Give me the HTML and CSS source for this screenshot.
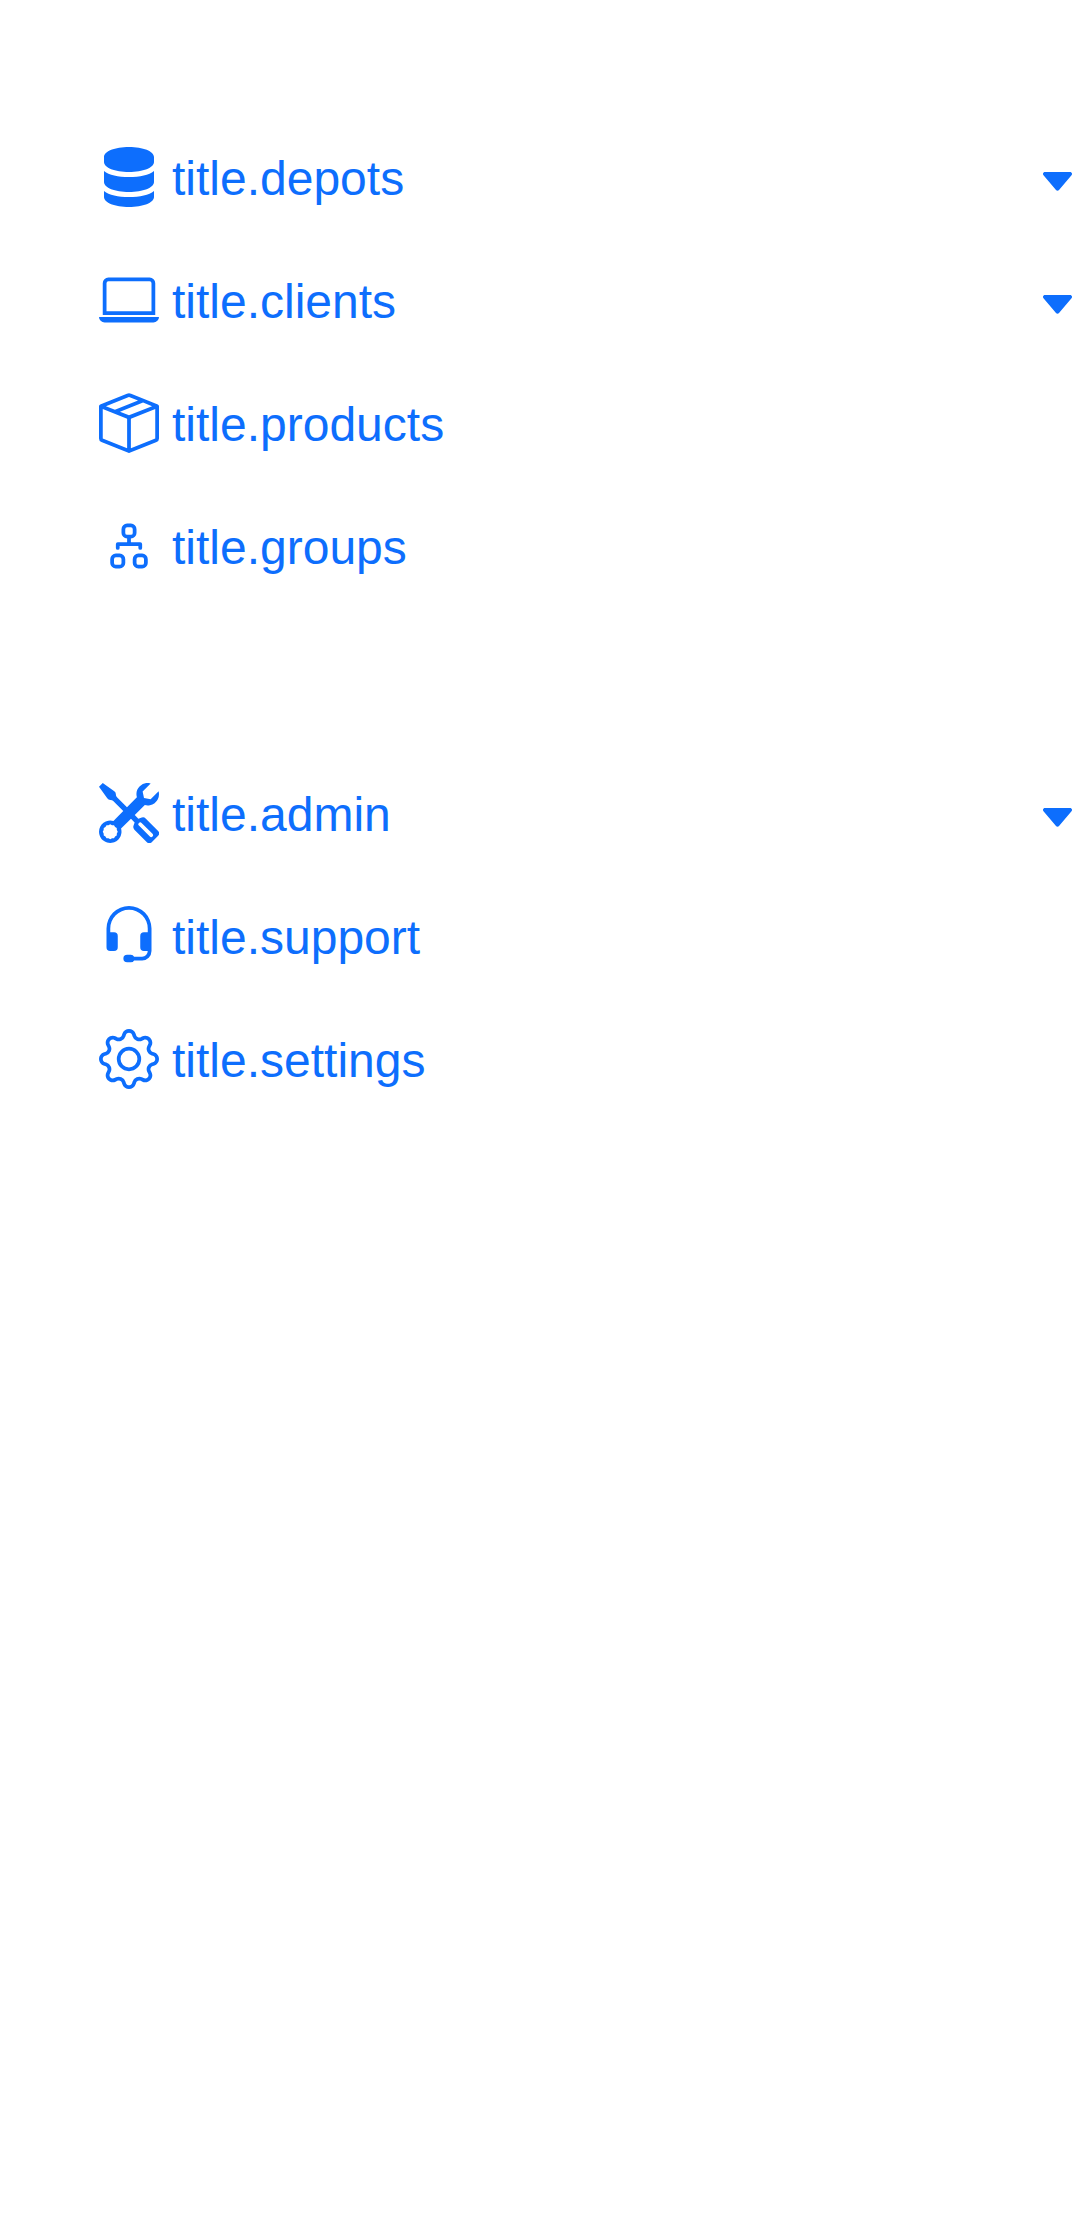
FILE: index.html
```html
<!DOCTYPE html>
<html lang="en">
<head>
<meta charset="utf-8">
<title>Menu</title>
<link rel="stylesheet" href="styles.css">
</head>
<body>
<nav class="menu">
  <ul class="group">
    <li class="item">
      <svg class="icon" viewBox="0 0 60 60"><path d="M5 10C5 4.300 16 0 30 0s25 4.300 25 10v5c0 5.700-11 10-25 10S5 20.700 5 15zM5 24c5 4 14 6 25 6s20-2 25-6v11c0 5.700-11 10-25 10S5 40.700 5 35zM5 44c5 4 14 6 25 6s20-2 25-6v6c0 5.700-11 10-25 10S5 55.700 5 50z"/></svg>
      <span class="label">title.depots</span>
      <svg class="caret" viewBox="0 0 29 19"><path d="M2 0h25c1.800 0 2.700 2 1.500 3.300L16 18c-.8 1-2.200 1-3 0L.5 3.300C-.7 2 .2 0 2 0z"/></svg>
    </li>
    <li class="item">
      <svg class="icon" viewBox="0 0 16 16"><path d="M13.500 3a.5.5 0 0 1 .5.5V11H2V3.500a.5.5 0 0 1 .5-.5zm-11-1A1.500 1.500 0 0 0 1 3.500V12h14V3.500A1.500 1.500 0 0 0 13.500 2zM0 12.500h16a1.500 1.500 0 0 1-1.500 1.500h-13A1.500 1.500 0 0 1 0 12.500"/></svg>
      <span class="label">title.clients</span>
      <svg class="caret" viewBox="0 0 29 19"><path d="M2 0h25c1.800 0 2.700 2 1.500 3.300L16 18c-.8 1-2.200 1-3 0L.5 3.300C-.7 2 .2 0 2 0z"/></svg>
    </li>
    <li class="item">
      <svg class="icon" viewBox="0 0 16 16"><path d="M8.186 1.113a.5.5 0 0 0-.372 0L1.846 3.500l2.404.961L10.404 2zm3.564 1.426L5.596 5 8 5.961 14.154 3.500zm3.250 1.700-6.500 2.600v7.922l6.500-2.600V4.240zM7.500 14.762V6.838L1 4.239v7.923zM7.443.184a1.500 1.500 0 0 1 1.114 0l7.129 2.852A.5.5 0 0 1 16 3.500v8.662a1 1 0 0 1-.629.928l-7.185 2.874a.5.5 0 0 1-.372 0L.63 13.090a1 1 0 0 1-.63-.928V3.500a.5.5 0 0 1 .314-.464z"/></svg>
      <span class="label">title.products</span>
    </li>
    <li class="item">
      <svg class="icon" viewBox="0 0 16 16"><path fill-rule="evenodd" d="M6 3.500A1.500 1.500 0 0 1 7.500 2h1A1.500 1.500 0 0 1 10 3.500v1A1.500 1.500 0 0 1 8.500 6v1H11a.5.5 0 0 1 .5.5v1a.5.5 0 0 1-1 0V8h-5v.5a.5.5 0 0 1-1 0v-1A.5.5 0 0 1 5 7h2.500V6A1.500 1.500 0 0 1 6 4.500zM8.500 5a.5.5 0 0 0 .5-.5v-1a.5.5 0 0 0-.5-.5h-1a.5.5 0 0 0-.5.5v1a.5.5 0 0 0 .5.5zM3 11.500A1.500 1.500 0 0 1 4.500 10h1A1.500 1.500 0 0 1 7 11.500v1A1.500 1.500 0 0 1 5.500 14h-1A1.500 1.500 0 0 1 3 12.500zm1.500-.5a.5.5 0 0 0-.5.5v1a.5.5 0 0 0 .5.5h1a.5.5 0 0 0 .5-.5v-1a.5.5 0 0 0-.5-.5zm4.500.5a1.500 1.500 0 0 1 1.500-1.500h1a1.500 1.500 0 0 1 1.500 1.500v1a1.500 1.500 0 0 1-1.500 1.500h-1A1.500 1.500 0 0 1 9 12.500zm1.500-.5a.5.5 0 0 0-.5.5v1a.5.5 0 0 0 .5.5h1a.5.5 0 0 0 .5-.5v-1a.5.5 0 0 0-.5-.5z"/></svg>
      <span class="label">title.groups</span>
    </li>
  </ul>
  <ul class="group">
    <li class="item">
      <svg class="icon" viewBox="0 0 16 16"><path d="M1 0 0 1l2.200 3.081a1 1 0 0 0 .815.419h.07a1 1 0 0 1 .708.293l2.675 2.675-2.617 2.654A3.003 3.003 0 0 0 0 13a3 3 0 1 0 5.878-.851l2.654-2.617.968.968-.305.914a1 1 0 0 0 .242 1.023l3.270 3.270a.997.997 0 0 0 1.414 0l1.586-1.586a.997.997 0 0 0 0-1.414l-3.270-3.270a1 1 0 0 0-1.023-.242L10.500 9.500l-.96-.96 2.680-2.643A3.005 3.005 0 0 0 16 3q0-.405-.102-.777l-2.140 2.141L12 4l-.364-1.757L13.777.102a3 3 0 0 0-3.675 3.680L7.462 6.460 4.793 3.793a1 1 0 0 1-.293-.707v-.071a1 1 0 0 0-.419-.814zm9.646 10.646a.5.5 0 0 1 .708 0l2.914 2.915a.5.5 0 0 1-.707.707l-2.915-2.914a.5.5 0 0 1 0-.708M3 11l.471.242.529.026.287.445.445.287.026.529L5 13l-.242.471-.026.529-.445.287-.287.445-.529.026L3 15l-.471-.242L2 14.732l-.287-.445L1.268 14l-.026-.529L1 13l.242-.471.026-.529.445-.287.287-.445.529-.026z"/></svg>
      <span class="label">title.admin</span>
      <svg class="caret" viewBox="0 0 29 19"><path d="M2 0h25c1.800 0 2.700 2 1.500 3.300L16 18c-.8 1-2.200 1-3 0L.5 3.300C-.7 2 .2 0 2 0z"/></svg>
    </li>
    <li class="item">
      <svg class="icon" viewBox="0 0 16 16"><path d="M8 1a5 5 0 0 0-5 5v1h1a1 1 0 0 1 1 1v3a1 1 0 0 1-1 1H3a1 1 0 0 1-1-1V6a6 6 0 1 1 12 0v6a2.500 2.500 0 0 1-2.500 2.500H9.366a1 1 0 0 1-.866.5h-1a1 1 0 1 1 0-2h1a1 1 0 0 1 .866.5H11.500A1.500 1.500 0 0 0 13 12h-1a1 1 0 0 1-1-1V8a1 1 0 0 1 1-1h1V6a5 5 0 0 0-5-5"/></svg>
      <span class="label">title.support</span>
    </li>
    <li class="item">
      <svg class="icon" viewBox="0 0 16 16"><path d="M8 4.754a3.246 3.246 0 1 0 0 6.492 3.246 3.246 0 0 0 0-6.492M5.754 8a2.246 2.246 0 1 1 4.492 0 2.246 2.246 0 0 1-4.492 0"/><path d="M9.796 1.343c-.527-1.790-3.065-1.790-3.592 0l-.094.319a.873.873 0 0 1-1.255.52l-.292-.16c-1.640-.892-3.433.902-2.540 2.541l.159.292a.873.873 0 0 1-.52 1.255l-.319.094c-1.790.527-1.790 3.065 0 3.592l.319.094a.873.873 0 0 1 .52 1.255l-.16.292c-.892 1.640.901 3.434 2.541 2.540l.292-.159a.873.873 0 0 1 1.255.52l.094.319c.527 1.790 3.065 1.790 3.592 0l.094-.319a.873.873 0 0 1 1.255-.52l.292.16c1.640.893 3.434-.902 2.540-2.541l-.159-.292a.873.873 0 0 1 .52-1.255l.319-.094c1.790-.527 1.790-3.065 0-3.592l-.319-.094a.873.873 0 0 1-.52-1.255l.16-.292c.893-1.640-.902-3.433-2.541-2.540l-.292.159a.873.873 0 0 1-1.255-.52zm-2.633.283c.246-.835 1.428-.835 1.674 0l.094.319a1.873 1.873 0 0 0 2.693 1.115l.291-.16c.764-.415 1.600.42 1.184 1.185l-.159.292a1.873 1.873 0 0 0 1.116 2.692l.318.094c.835.246.835 1.428 0 1.674l-.319.094a1.873 1.873 0 0 0-1.115 2.693l.16.291c.415.764-.42 1.600-1.185 1.184l-.291-.159a1.873 1.873 0 0 0-2.693 1.116l-.094.318c-.246.835-1.428.835-1.674 0l-.094-.319a1.873 1.873 0 0 0-2.692-1.115l-.292.16c-.764.415-1.600-.42-1.184-1.185l.159-.291A1.873 1.873 0 0 0 1.945 8.930l-.319-.094c-.835-.246-.835-1.428 0-1.674l.319-.094A1.873 1.873 0 0 0 3.060 4.377l-.16-.292c-.415-.764.42-1.600 1.185-1.184l.292.159a1.873 1.873 0 0 0 2.692-1.115z"/></svg>
      <span class="label">title.settings</span>
    </li>
  </ul>
</nav>
</body>
</html>
```
FILE: styles.css
```css
body {
  margin: 0;
  background: #fff;
  font-family: "Liberation Sans", Arial, sans-serif;
}

.menu {
  display: flex;
  flex-direction: column;
  gap: 144px;
  padding: 118px 8px 0 99px;
  color: #0d6efd;
}

.group {
  margin: 0;
  padding: 0;
  list-style: none;
}

.item {
  display: flex;
  align-items: center;
  height: 123px;
  font-size: 48px;
  line-height: 72px;
}

.label {
  margin-bottom: 2px;
}

.icon {
  width: 60px;
  height: 60px;
  margin: 0 13px 5px 0;
  fill: currentColor;
}

.caret {
  width: 29px;
  height: 19px;
  margin: 3px 0 0 auto;
  fill: currentColor;
}
```
